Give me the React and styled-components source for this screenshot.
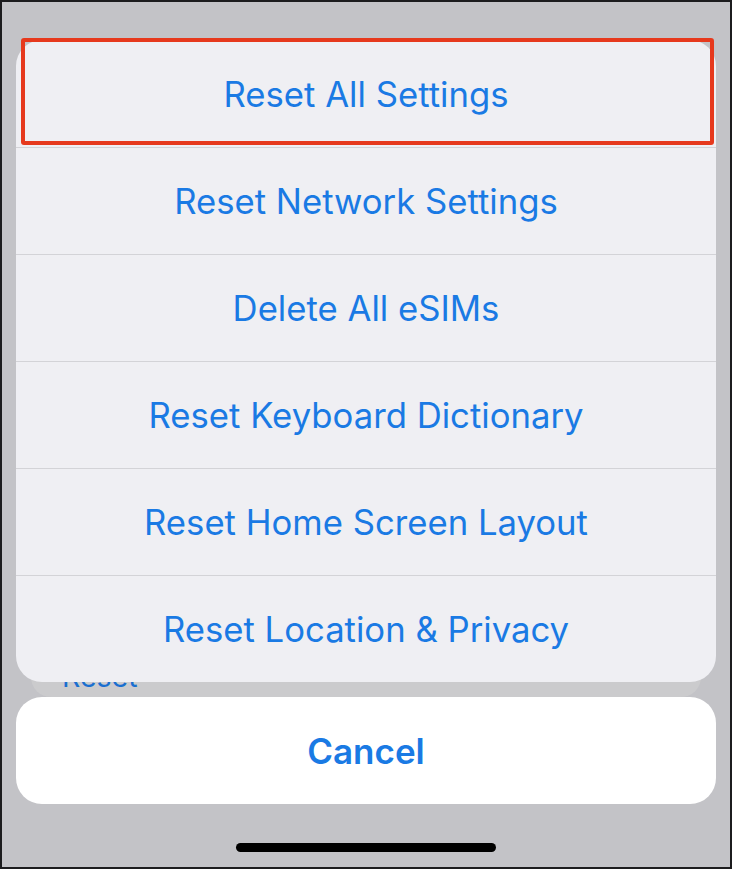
import React from 'react'
import styled, { createGlobalStyle } from 'styled-components'

const GlobalStyle = createGlobalStyle`
	html, body {
		margin: 0;
		padding: 0;
		background: #c3c3c7;
	}
	* {
		box-sizing: border-box;
	}
`

const Screen = styled.div`
	position: relative;
	width: 732px;
	height: 869px;
	overflow: hidden;
	border: 2px solid #1c1c1e;
	background: #c3c3c7;
	font-family: Inter, "Noto Sans", "Liberation Sans", sans-serif;
`

const Page = styled.div`
	padding: 0 29px;
`

const SettingsCard = styled.div`
	margin-top: 635px;
	height: 60px;
	border-radius: 20px;
	background: #cbcbcd;
	display: flex;
	align-items: flex-end;
	padding: 0 0 2px 31px;
`

const SettingsLabel = styled.span`
	font-size: 28.5px;
	line-height: 36px;
	color: #1a6fd0;
`

const Overlay = styled.div`
	position: absolute;
	inset: 0;
	display: flex;
	flex-direction: column;
	align-items: center;
	padding: 38px 14px 0;
`

const Sheet = styled.div`
	position: relative;
	width: 700px;
	border-radius: 26px;
	background: #efeff3;
	display: flex;
	flex-direction: column;
`

const Action = styled.button`
	height: 107px;
	border: 0;
	border-top: ${({ $first }) => ($first ? '0' : '1px solid #d3d3d7')};
	background: transparent;
	font-family: inherit;
	font-size: 34.7px;
	font-weight: 400;
	color: #1a7ae4;
	display: flex;
	align-items: center;
	justify-content: center;
	padding: 0;
`

const Highlight = styled.div`
	position: absolute;
	top: -2px;
	left: 5px;
	right: 2px;
	height: 107px;
	border: 4px solid #e6391d;
	border-radius: 3px;
	pointer-events: none;
`

const CancelButton = styled.button`
	margin-top: 15px;
	width: 700px;
	height: 107px;
	border: 0;
	border-radius: 26px;
	background: #ffffff;
	font-family: inherit;
	font-size: 35px;
	font-weight: 600;
	color: #1a7ae4;
`

const HomeIndicator = styled.div`
	margin-top: 39px;
	width: 260px;
	height: 9px;
	border-radius: 5px;
	background: #000;
`

const actions = [
	'Reset All Settings',
	'Reset Network Settings',
	'Delete All eSIMs',
	'Reset Keyboard Dictionary',
	'Reset Home Screen Layout',
	'Reset Location & Privacy',
]

export default function App() {
	return (
		<>
			<GlobalStyle />
			<Screen>
				<Page>
					<SettingsCard>
						<SettingsLabel>Reset</SettingsLabel>
					</SettingsCard>
				</Page>
				<Overlay>
					<Sheet>
						{actions.map((label, i) => (
							<Action key={label} $first={i === 0}>
								{label}
							</Action>
						))}
						<Highlight />
					</Sheet>
					<CancelButton>Cancel</CancelButton>
					<HomeIndicator />
				</Overlay>
			</Screen>
		</>
	)
}
